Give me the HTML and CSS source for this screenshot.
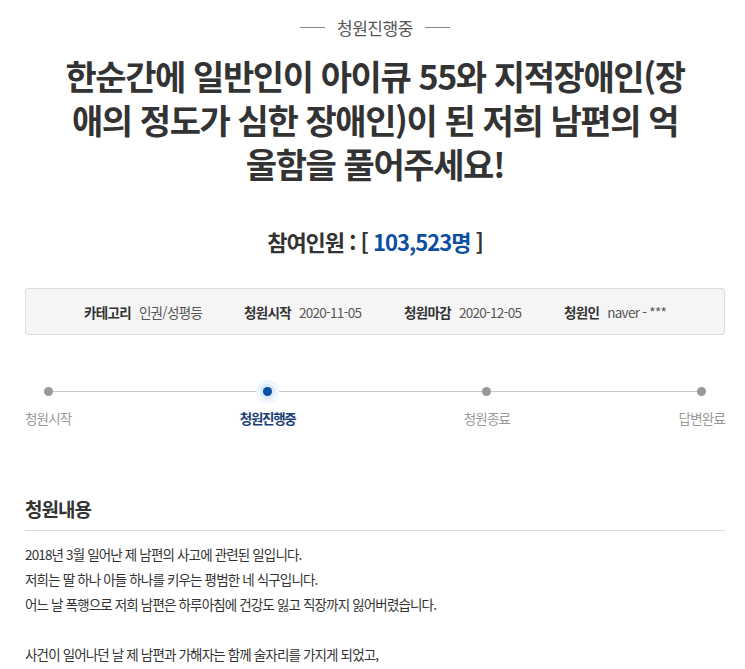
FILE: index.html
```html
<!DOCTYPE html>
<html lang="ko">
<head>
<meta charset="utf-8">
<title>청원진행중</title>
<link rel="stylesheet" href="styles.css">
</head>
<body>
<div class="page">
  <div class="status"><span class="dash"></span><span class="status-text">청원진행중</span><span class="dash"></span></div>
  <h1 class="title">한순간에 일반인이 아이큐 55와 지적장애인(장<br>애의 정도가 심한 장애인)이 된 저희 남편의 억<br>울함을 풀어주세요!</h1>
  <div class="count">참여인원 : [ <span class="num">103,523명</span> ]</div>
  <ul class="info">
    <li><strong>카테고리</strong><span>인권/성평등</span></li>
    <li><strong>청원시작</strong><span>2020-11-05</span></li>
    <li><strong>청원마감</strong><span>2020-12-05</span></li>
    <li><strong>청원인</strong><span>naver - ***</span></li>
  </ul>
  <div class="progress">
    <div class="track"></div>
    <div class="step"><span class="dot"></span><span class="label">청원시작</span></div>
    <div class="step active"><span class="dot"></span><span class="label">청원진행중</span></div>
    <div class="step"><span class="dot"></span><span class="label">청원종료</span></div>
    <div class="step"><span class="dot"></span><span class="label">답변완료</span></div>
  </div>
  <h2 class="section">청원내용</h2>
  <div class="body">
    <p>2018년 3월 일어난 제 남편의 사고에 관련된 일입니다.</p>
    <p>저희는 딸 하나 아들 하나를 키우는 평범한 네 식구입니다.</p>
    <p>어느 날 폭행으로 저희 남편은 하루아침에 건강도 잃고 직장까지 잃어버렸습니다.</p>
    <p class="blank">&nbsp;</p>
    <p>사건이 일어나던 날 제 남편과 가해자는 함께 술자리를 가지게 되었고,</p>
  </div>
</div>
</body>
</html>
```
FILE: styles.css
```css
* { box-sizing: border-box; }
html, body { margin: 0; padding: 0; background: #fff; }
body {
  font-family: "Noto Sans CJK KR", "Noto Sans", sans-serif;
  color: #333;
}
.page {
  width: 700px;
  margin-left: 25px;
  padding-top: 15px;
}
.status {
  display: flex;
  justify-content: center;
  align-items: center;
  gap: 12px;
  height: 24px;
  font-size: 17px;
  color: #555;
  letter-spacing: -0.4px;
}
.dash {
  width: 25px;
  height: 1px;
  background: #888;
}
.title {
  margin: 15px 0 0;
  text-align: center;
  font-size: 34px;
  line-height: 44px;
  font-weight: 700;
  letter-spacing: -1.4px;
  color: #333;
}
.count {
  margin-top: 40px;
  text-align: center;
  font-size: 22px;
  font-weight: 700;
  letter-spacing: -1px;
  line-height: 30px;
  color: #333;
}
.num { color: #0b4ea2; }
.info {
  list-style: none;
  margin: 32px 0 0;
  padding: 0 0 0 58px;
  height: 47px;
  display: flex;
  align-items: center;
  background: #f5f5f5;
  border: 1px solid #dcdcdc;
  border-radius: 3px;
  font-size: 13.5px;
  letter-spacing: -0.7px;
}
.info li { display: flex; gap: 8px; width: 161px; }
.info strong { font-weight: 700; color: #333; }
.info span { color: #555; }
.progress {
  position: relative;
  margin-top: 40px;
  height: 62px;
  display: flex;
  justify-content: space-between;
}
.track {
  position: absolute;
  left: 22px;
  right: 24px;
  top: 16px;
  height: 1px;
  background: #c8c8c8;
}
.step {
  position: relative;
  display: flex;
  flex-direction: column;
  align-items: center;
}
.dot {
  width: 9px;
  height: 9px;
  border-radius: 50%;
  background: #999;
  margin-top: 12px;
}
.active .dot {
  background: #0b4ea2;
  box-shadow: 0 0 0 3px #d9eafc, 0 0 0 7px #eff6fe;
}
.label {
  margin-top: 12px;
  font-size: 13.5px;
  letter-spacing: -0.8px;
  color: #999;
  white-space: nowrap;
}
.active .label { color: #1b3e78; font-weight: 700; letter-spacing: -1.3px; }
.section {
  margin: 58px 0 0;
  padding-bottom: 7px;
  border-bottom: 1px solid #dcdcdc;
  font-size: 19px;
  font-weight: 700;
  line-height: 28px;
  letter-spacing: -1px;
  color: #333;
}
.body {
  padding-top: 11px;
  font-size: 13.5px;
  letter-spacing: -0.85px;
  color: #333;
}
.body p { margin: 0; line-height: 25px; }
```
